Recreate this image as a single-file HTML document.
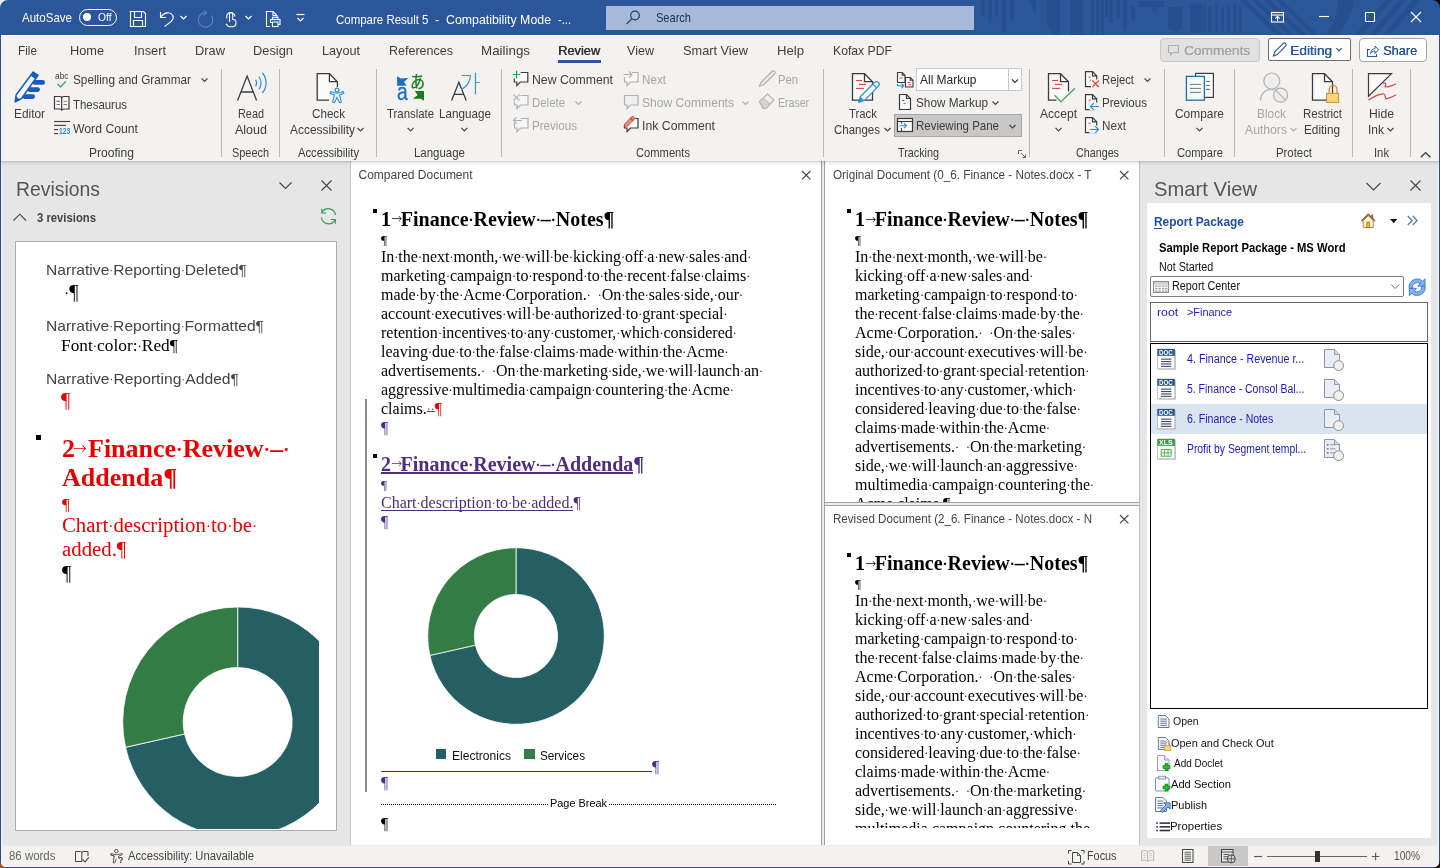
<!DOCTYPE html>
<html lang="en"><head><meta charset="utf-8"><title>Compare Result 5 - Word</title>
<style>
html,body{margin:0;padding:0}
body{width:1440px;height:868px;overflow:hidden;background:#f3f3f3;font-family:"Liberation Sans",sans-serif;color:#444;position:relative}
#app{position:absolute;left:0;top:0;width:1440px;height:868px;overflow:hidden;will-change:transform}
#app div,#app svg,#app span.t{position:absolute;display:block}
#app span.t{white-space:pre}
#app div.clip{overflow:hidden}
i{font-style:normal;font-size:.75em;position:relative;top:-.07em}
</style></head>
<body><div id="app">
<section class="titlebar">
<div style="left:0px;top:0px;width:1440px;height:35px;background:#2b579a;"></div>
<svg style="left:0;top:0" width="1440" height="35" viewBox="0 0 1440 35" fill="#254f8e"><rect x="981" y="0" width="4" height="16"/><rect x="988" y="0" width="4" height="23"/><rect x="995" y="0" width="3.5" height="17"/><rect x="1002" y="0" width="4" height="32"/><rect x="1010" y="0" width="4" height="21"/><rect x="1070" y="0" width="13" height="35"/><rect x="1091" y="0" width="3" height="35"/><rect x="1096" y="0" width="3" height="35"/><rect x="1101" y="0" width="2.5" height="35"/><rect x="1105" y="0" width="3" height="17"/><rect x="1109.5" y="0" width="3.5" height="23"/><rect x="1116" y="0" width="4" height="18"/><rect x="1123" y="0" width="4" height="31"/><rect x="1131" y="6" width="4" height="15"/><rect x="1138" y="1" width="26" height="6"/><rect x="1203" y="4" width="3" height="28"/><rect x="1208" y="6" width="4" height="26"/><rect x="1215" y="4" width="3" height="29"/><rect x="1221" y="7" width="3" height="24"/><rect x="1227" y="5" width="3" height="27"/><rect x="1233" y="3" width="4" height="30"/><rect x="1239" y="6" width="3" height="26"/><path d="M1029,0H1036V15Z"/><path d="M1047,0H1060V35H1054L1047,26Z"/><path d="M1150,7H1157V14Z"/><path d="M1168,7H1182V26A5,5 0 0 1 1177,31H1173A5,5 0 0 1 1168,26Z"/><path d="M1190,6L1196,3H1202V33H1190Z"/><path d="M1246,0L1282,35H1276L1240,0Z"/><path d="M1258,0L1294,35H1288L1252,0Z"/><path d="M1270,0L1306,35H1300L1264,0Z"/><path d="M1282,0L1318,35H1312L1276,0Z"/><path d="M1338,0H1354C1352,14 1346,26 1336,35H1326C1334,24 1338,12 1338,0Z"/><path d="M1392,0L1362,35H1355L1385,0Z"/><path d="M1406,0L1376,35H1369L1399,0Z"/><path d="M1420,0L1390,35H1383L1413,0Z"/></svg>
<div style="left:606px;top:6px;width:368px;height:24px;background:#a6b9d8;"></div>
<span class="t" style="left:22px;top:11px;font-size:13px;line-height:13px;color:#fff;transform:scaleX(0.8869);transform-origin:0 0;">AutoSave</span>
<div style="left:79px;top:9px;width:36px;height:15px;border:1px solid #fff;border-radius:9px"></div>
<div style="left:83px;top:13px;width:8px;height:8px;border-radius:4px;background:#fff"></div>
<span class="t" style="left:98px;top:12px;font-size:11px;line-height:11px;color:#fff;transform:scaleX(0.9320);transform-origin:0 0;">Off</span>
<span class="t" style="left:335.5px;top:13px;font-size:13px;line-height:13px;color:#fff;transform:scaleX(0.8828);transform-origin:0 0;">Compare Result 5</span>
<span class="t" style="left:435px;top:13px;font-size:13px;line-height:13px;color:#fff;">-</span>
<span class="t" style="left:445.75px;top:13px;font-size:13px;line-height:13px;color:#fff;transform:scaleX(0.9498);transform-origin:0 0;">Compatibility Mode</span>
<span class="t" style="left:557.5px;top:13px;font-size:13px;line-height:13px;color:#fff;transform:scaleX(0.8568);transform-origin:0 0;">-...</span>
<span class="t" style="left:656px;top:11px;font-size:13px;line-height:13px;color:#1b2f55;transform:scaleX(0.8495);transform-origin:0 0;">Search</span>
</section>
<section class="tabs">
<div style="left:0px;top:35px;width:1440px;height:126px;background:#f3f2f1;"></div>
<div style="left:0px;top:35px;width:1440px;height:1px;background:#fbfbfb;"></div>
<span class="t" style="left:18px;top:44px;font-size:13.5px;line-height:13.5px;color:#3d3d3d;transform:scaleX(0.8729);transform-origin:0 0;">File</span>
<span class="t" style="left:70px;top:44px;font-size:13.5px;line-height:13.5px;color:#3d3d3d;transform:scaleX(0.9440);transform-origin:0 0;">Home</span>
<span class="t" style="left:134px;top:44px;font-size:13.5px;line-height:13.5px;color:#3d3d3d;transform:scaleX(0.9477);transform-origin:0 0;">Insert</span>
<span class="t" style="left:195px;top:44px;font-size:13.5px;line-height:13.5px;color:#3d3d3d;transform:scaleX(0.9519);transform-origin:0 0;">Draw</span>
<span class="t" style="left:253px;top:44px;font-size:13.5px;line-height:13.5px;color:#3d3d3d;transform:scaleX(0.9517);transform-origin:0 0;">Design</span>
<span class="t" style="left:322px;top:44px;font-size:13.5px;line-height:13.5px;color:#3d3d3d;transform:scaleX(0.9372);transform-origin:0 0;">Layout</span>
<span class="t" style="left:389px;top:44px;font-size:13.5px;line-height:13.5px;color:#3d3d3d;transform:scaleX(0.9269);transform-origin:0 0;">References</span>
<span class="t" style="left:481px;top:44px;font-size:13.5px;line-height:13.5px;color:#3d3d3d;transform:scaleX(0.9893);transform-origin:0 0;">Mailings</span>
<span class="t" style="left:558px;top:44px;font-size:13.5px;line-height:13.5px;color:#333;transform:scaleX(0.9488);transform-origin:0 0;text-shadow:0.4px 0 0 #333;">Review</span>
<span class="t" style="left:627px;top:44px;font-size:13.5px;line-height:13.5px;color:#3d3d3d;transform:scaleX(0.9300);transform-origin:0 0;">View</span>
<span class="t" style="left:683px;top:44px;font-size:13.5px;line-height:13.5px;color:#3d3d3d;transform:scaleX(0.9450);transform-origin:0 0;">Smart View</span>
<span class="t" style="left:777px;top:44px;font-size:13.5px;line-height:13.5px;color:#3d3d3d;transform:scaleX(0.9724);transform-origin:0 0;">Help</span>
<span class="t" style="left:833px;top:44px;font-size:13.5px;line-height:13.5px;color:#3d3d3d;transform:scaleX(0.9038);transform-origin:0 0;">Kofax PDF</span>
<div style="left:558px;top:60px;width:43px;height:3px;background:#2b579a;"></div>
<div style="left:1160px;top:38px;width:98px;height:22px;border:1px solid #c8c8c8;border-radius:4px;background:#e1e1e1"></div>
<span class="t" style="left:1184px;top:44px;font-size:13.5px;line-height:13.5px;color:#a6a6a6;transform:scaleX(1.0113);transform-origin:0 0;text-shadow:0.3px 0 0 #a6a6a6;">Comments</span>
<div style="left:1268px;top:38px;width:81px;height:21px;border:1px solid #6e6e6e;border-radius:2px;background:#fff"></div>
<span class="t" style="left:1290px;top:44px;font-size:13.5px;line-height:13.5px;color:#2b579a;transform:scaleX(1.0174);transform-origin:0 0;text-shadow:0.4px 0 0 #2b579a;">Editing</span>
<div style="left:1359px;top:38px;width:66px;height:22px;border:1px solid #a6a6a6;border-radius:4px;background:#fff"></div>
<span class="t" style="left:1383px;top:44px;font-size:13.5px;line-height:13.5px;color:#2b579a;transform:scaleX(0.9436);transform-origin:0 0;text-shadow:0.4px 0 0 #2b579a;">Share</span>
</section>
<section class="ribbon-text">
<div style="left:221px;top:69px;width:1px;height:88px;background:#b9b9b9;"></div>
<div style="left:279px;top:69px;width:1px;height:88px;background:#b9b9b9;"></div>
<div style="left:376px;top:69px;width:1px;height:88px;background:#b9b9b9;"></div>
<div style="left:501px;top:69px;width:1px;height:88px;background:#b9b9b9;"></div>
<div style="left:823px;top:69px;width:1px;height:88px;background:#b9b9b9;"></div>
<div style="left:1029px;top:69px;width:1px;height:88px;background:#b9b9b9;"></div>
<div style="left:1164px;top:69px;width:1px;height:88px;background:#b9b9b9;"></div>
<div style="left:1234px;top:69px;width:1px;height:88px;background:#b9b9b9;"></div>
<div style="left:1352px;top:69px;width:1px;height:88px;background:#b9b9b9;"></div>
<div style="left:1410px;top:69px;width:1px;height:88px;background:#b9b9b9;"></div>
<span class="t" style="left:14px;top:108px;font-size:12.4px;line-height:12.4px;color:#3d3d3d;transform:scaleX(0.9575);transform-origin:0 0;">Editor</span>
<span class="t" style="left:73px;top:74px;font-size:12.4px;line-height:12.4px;color:#3d3d3d;transform:scaleX(0.9519);transform-origin:0 0;">Spelling and Grammar</span>
<span class="t" style="left:73px;top:99px;font-size:12.4px;line-height:12.4px;color:#3d3d3d;transform:scaleX(0.9223);transform-origin:0 0;">Thesaurus</span>
<span class="t" style="left:73px;top:123px;font-size:12.4px;line-height:12.4px;color:#3d3d3d;transform:scaleX(0.9865);transform-origin:0 0;">Word Count</span>
<span class="t" style="left:89px;top:147px;font-size:12.4px;line-height:12.4px;color:#3d3d3d;transform:scaleX(0.9749);transform-origin:0 0;">Proofing</span>
<span class="t" style="left:238px;top:108px;font-size:12.4px;line-height:12.4px;color:#3d3d3d;transform:scaleX(0.8776);transform-origin:0 0;">Read</span>
<span class="t" style="left:235px;top:124px;font-size:12.4px;line-height:12.4px;color:#3d3d3d;transform:scaleX(1.0094);transform-origin:0 0;">Aloud</span>
<span class="t" style="left:232px;top:147px;font-size:12.4px;line-height:12.4px;color:#3d3d3d;transform:scaleX(0.8803);transform-origin:0 0;">Speech</span>
<span class="t" style="left:312px;top:108px;font-size:12.4px;line-height:12.4px;color:#3d3d3d;transform:scaleX(0.9395);transform-origin:0 0;">Check</span>
<span class="t" style="left:290px;top:124px;font-size:12.4px;line-height:12.4px;color:#3d3d3d;transform:scaleX(0.9632);transform-origin:0 0;">Accessibility</span>
<span class="t" style="left:298px;top:147px;font-size:12.4px;line-height:12.4px;color:#3d3d3d;transform:scaleX(0.9039);transform-origin:0 0;">Accessibility</span>
<span class="t" style="left:387px;top:108px;font-size:12.4px;line-height:12.4px;color:#3d3d3d;transform:scaleX(0.9179);transform-origin:0 0;">Translate</span>
<span class="t" style="left:439px;top:108px;font-size:12.4px;line-height:12.4px;color:#3d3d3d;transform:scaleX(0.9430);transform-origin:0 0;">Language</span>
<span class="t" style="left:414px;top:147px;font-size:12.4px;line-height:12.4px;color:#3d3d3d;transform:scaleX(0.9249);transform-origin:0 0;">Language</span>
<span class="t" style="left:532px;top:74px;font-size:12.4px;line-height:12.4px;color:#3d3d3d;transform:scaleX(0.9886);transform-origin:0 0;">New Comment</span>
<span class="t" style="left:532px;top:97px;font-size:12.4px;line-height:12.4px;color:#a6a6a6;transform:scaleX(0.9211);transform-origin:0 0;">Delete</span>
<span class="t" style="left:532px;top:120px;font-size:12.4px;line-height:12.4px;color:#a6a6a6;transform:scaleX(0.9332);transform-origin:0 0;">Previous</span>
<span class="t" style="left:642px;top:74px;font-size:12.4px;line-height:12.4px;color:#a6a6a6;transform:scaleX(0.9418);transform-origin:0 0;">Next</span>
<span class="t" style="left:642px;top:97px;font-size:12.4px;line-height:12.4px;color:#a6a6a6;transform:scaleX(0.9752);transform-origin:0 0;">Show Comments</span>
<span class="t" style="left:642px;top:120px;font-size:12.4px;line-height:12.4px;color:#3d3d3d;transform:scaleX(0.9907);transform-origin:0 0;">Ink Comment</span>
<span class="t" style="left:636px;top:147px;font-size:12.4px;line-height:12.4px;color:#3d3d3d;transform:scaleX(0.9014);transform-origin:0 0;">Comments</span>
<span class="t" style="left:778px;top:74px;font-size:12.4px;line-height:12.4px;color:#a6a6a6;transform:scaleX(0.9072);transform-origin:0 0;">Pen</span>
<span class="t" style="left:778px;top:97px;font-size:12.4px;line-height:12.4px;color:#a6a6a6;transform:scaleX(0.8493);transform-origin:0 0;">Eraser</span>
<span class="t" style="left:849px;top:108px;font-size:12.4px;line-height:12.4px;color:#3d3d3d;transform:scaleX(0.9171);transform-origin:0 0;">Track</span>
<span class="t" style="left:834px;top:124px;font-size:12.4px;line-height:12.4px;color:#3d3d3d;transform:scaleX(0.9272);transform-origin:0 0;">Changes</span>
<div style="left:916px;top:68px;width:104px;height:21px;border:1px solid #c8c8c8;background:#fff"></div>
<div style="left:1008px;top:69px;width:1px;height:21px;background:#c8c8c8;"></div>
<span class="t" style="left:919.5px;top:74px;font-size:12.4px;line-height:12.4px;color:#262626;transform:scaleX(0.9653);transform-origin:0 0;">All Markup</span>
<span class="t" style="left:916px;top:97px;font-size:12.4px;line-height:12.4px;color:#3d3d3d;transform:scaleX(0.9503);transform-origin:0 0;">Show Markup</span>
<div style="left:894px;top:114px;width:126px;height:21px;border:1px solid #a6a6a6;background:#c8c8c8"></div>
<span class="t" style="left:916px;top:120px;font-size:12.4px;line-height:12.4px;color:#3d3d3d;transform:scaleX(0.9269);transform-origin:0 0;">Reviewing Pane</span>
<span class="t" style="left:898px;top:147px;font-size:12.4px;line-height:12.4px;color:#3d3d3d;transform:scaleX(0.8712);transform-origin:0 0;">Tracking</span>
<span class="t" style="left:1040px;top:108px;font-size:12.4px;line-height:12.4px;color:#3d3d3d;transform:scaleX(0.9765);transform-origin:0 0;">Accept</span>
<span class="t" style="left:1102px;top:74px;font-size:12.4px;line-height:12.4px;color:#3d3d3d;transform:scaleX(0.9110);transform-origin:0 0;">Reject</span>
<span class="t" style="left:1102px;top:97px;font-size:12.4px;line-height:12.4px;color:#3d3d3d;transform:scaleX(0.9332);transform-origin:0 0;">Previous</span>
<span class="t" style="left:1102px;top:120px;font-size:12.4px;line-height:12.4px;color:#3d3d3d;transform:scaleX(0.9418);transform-origin:0 0;">Next</span>
<span class="t" style="left:1076px;top:147px;font-size:12.4px;line-height:12.4px;color:#3d3d3d;transform:scaleX(0.8668);transform-origin:0 0;">Changes</span>
<span class="t" style="left:1175px;top:108px;font-size:12.4px;line-height:12.4px;color:#3d3d3d;transform:scaleX(0.9614);transform-origin:0 0;">Compare</span>
<span class="t" style="left:1177px;top:147px;font-size:12.4px;line-height:12.4px;color:#3d3d3d;transform:scaleX(0.9025);transform-origin:0 0;">Compare</span>
<span class="t" style="left:1257px;top:108px;font-size:12.4px;line-height:12.4px;color:#a6a6a6;transform:scaleX(0.9567);transform-origin:0 0;">Block</span>
<span class="t" style="left:1245px;top:124px;font-size:12.4px;line-height:12.4px;color:#a6a6a6;transform:scaleX(0.9835);transform-origin:0 0;">Authors</span>
<span class="t" style="left:1303px;top:108px;font-size:12.4px;line-height:12.4px;color:#3d3d3d;transform:scaleX(0.9286);transform-origin:0 0;">Restrict</span>
<span class="t" style="left:1304px;top:124px;font-size:12.4px;line-height:12.4px;color:#3d3d3d;transform:scaleX(0.9501);transform-origin:0 0;">Editing</span>
<span class="t" style="left:1276px;top:147px;font-size:12.4px;line-height:12.4px;color:#3d3d3d;transform:scaleX(0.9168);transform-origin:0 0;">Protect</span>
<span class="t" style="left:1369px;top:108px;font-size:12.4px;line-height:12.4px;color:#3d3d3d;transform:scaleX(0.9810);transform-origin:0 0;">Hide</span>
<span class="t" style="left:1368px;top:124px;font-size:12.4px;line-height:12.4px;color:#3d3d3d;transform:scaleX(0.9679);transform-origin:0 0;">Ink</span>
<span class="t" style="left:1374px;top:147px;font-size:12.4px;line-height:12.4px;color:#3d3d3d;transform:scaleX(0.9074);transform-origin:0 0;">Ink</span>
</section>
<section class="panes-bg">
<div style="left:0px;top:161px;width:1440px;height:684px;background:#fff;"></div>
<div style="left:0px;top:161px;width:350px;height:684px;background:#e6e6e6;"></div>
<div style="left:350px;top:161px;width:1px;height:684px;background:#c6c6c6;"></div>
<div style="left:1140px;top:161px;width:300px;height:684px;background:#e6e6e6;"></div>
<div style="left:1139px;top:161px;width:1px;height:684px;background:#c0c0c0;"></div>
<div style="left:821px;top:161px;width:4px;height:684px;background:#ececec;"></div>
<div style="left:821px;top:161px;width:1px;height:684px;background:#a0a0a0;"></div>
<div style="left:824px;top:161px;width:1px;height:684px;background:#a0a0a0;"></div>
</section>
<section class="revisions">
<span class="t" style="left:16px;top:178px;font-size:21px;line-height:21px;color:#555;transform:scaleX(0.9226);transform-origin:0 0;">Revisions</span>
<span class="t" style="left:37px;top:212px;font-size:12px;line-height:12px;font-weight:700;transform:scaleX(0.9409);transform-origin:0 0;">3 revisions</span>
<div style="left:15px;top:241px;width:320px;height:588px;border:1px solid #ababab;background:#fff"></div>
<span class="t" style="left:46px;top:262px;font-size:15px;line-height:15px;transform:scaleX(1.0405);transform-origin:0 0;">Narrative<i>·</i>Reporting<i>·</i>Deleted¶</span>
<span class="t" style="left:64px;top:282px;font-size:20.8px;line-height:20.8px;font-family:'Liberation Serif',serif;color:#000;"><i>·</i>¶</span>
<span class="t" style="left:46px;top:318px;font-size:15px;line-height:15px;transform:scaleX(1.0389);transform-origin:0 0;">Narrative<i>·</i>Reporting<i>·</i>Formatted¶</span>
<span class="t" style="left:61px;top:337px;font-size:17.33px;line-height:17.33px;font-family:'Liberation Serif',serif;color:#000;">Font<i>·</i>color:<i>·</i>Red¶</span>
<span class="t" style="left:46px;top:371px;font-size:15px;line-height:15px;transform:scaleX(1.0441);transform-origin:0 0;">Narrative<i>·</i>Reporting<i>·</i>Added¶</span>
<span class="t" style="left:61px;top:390px;font-size:20.8px;line-height:20.8px;font-family:'Liberation Serif',serif;color:#e60000;">¶</span>
<div style="left:36px;top:435px;width:5px;height:5px;background:#000;"></div>
<span class="t" style="left:62px;top:436px;font-size:26px;line-height:26px;font-family:'Liberation Serif',serif;font-weight:700;color:#e60000;">2</span>
<span class="t" style="left:72.5px;top:440px;font-size:17.2px;line-height:17.2px;font-family:'DejaVu Sans','Liberation Sans',sans-serif;font-weight:200;color:#e60000;">→</span>
<span class="t" style="left:88px;top:436px;font-size:26px;line-height:26px;font-family:'Liberation Serif',serif;font-weight:700;color:#e60000;">Finance<i>·</i>Review<i>·</i>–<i>·</i></span>
<span class="t" style="left:62px;top:465px;font-size:26px;line-height:26px;font-family:'Liberation Serif',serif;font-weight:700;color:#e60000;">Addenda¶</span>
<span class="t" style="left:62px;top:496px;font-size:17.33px;line-height:17.33px;font-family:'Liberation Serif',serif;color:#e60000;">¶</span>
<span class="t" style="left:62px;top:515px;font-size:20.8px;line-height:20.8px;font-family:'Liberation Serif',serif;color:#e60000;">Chart<i>·</i>description<i>·</i>to<i>·</i>be<i>·</i></span>
<span class="t" style="left:62px;top:539px;font-size:20.8px;line-height:20.8px;font-family:'Liberation Serif',serif;color:#e60000;">added.¶</span>
<span class="t" style="left:62px;top:563px;font-size:20.8px;line-height:20.8px;font-family:'Liberation Serif',serif;color:#000;">¶</span>
<svg style="left:16px;top:600px;" width="303" height="229" viewBox="0 0 303 229"><path d="M221.70,7.00 A115,115 0 1 1 109.52,147.30 L168.54,133.99 A54.5,54.5 0 1 0 221.70,67.50 Z" fill="#255e63" stroke="#fff" stroke-width="0.8"/><path d="M109.52,147.30 A115,115 0 0 1 221.70,7.00 L221.70,67.50 A54.5,54.5 0 0 0 168.54,133.99 Z" fill="#347c45" stroke="#fff" stroke-width="0.8"/></svg>
</section>
<section class="compared">
<span class="t" style="left:358.5px;top:169px;font-size:12px;line-height:12px;">Compared Document</span>
<div style="left:373px;top:209px;width:4px;height:4px;background:#000;"></div>
<span class="t" style="left:381px;top:209px;font-size:20px;line-height:20px;font-family:'Liberation Serif',serif;font-weight:700;color:#000;">1</span>
<span class="t" style="left:391px;top:212px;font-size:13.2px;line-height:13.2px;font-family:'DejaVu Sans','Liberation Sans',sans-serif;font-weight:200;color:#000;">→</span>
<span class="t" style="left:400.8px;top:209px;font-size:20px;line-height:20px;font-family:'Liberation Serif',serif;font-weight:700;color:#000;">Finance<i>·</i>Review<i>·</i>–<i>·</i>Notes¶</span>
<span class="t" style="left:381px;top:233px;font-size:13.33px;line-height:13.33px;font-family:'Liberation Serif',serif;color:#000;">¶</span>
<span class="t" style="left:381px;top:249px;font-size:16px;line-height:16px;font-family:'Liberation Serif',serif;color:#000;">In<i>·</i>the<i>·</i>next<i>·</i>month,<i>·</i>we<i>·</i>will<i>·</i>be<i>·</i>kicking<i>·</i>off<i>·</i>a<i>·</i>new<i>·</i>sales<i>·</i>and<i>·</i></span>
<span class="t" style="left:381px;top:268px;font-size:16px;line-height:16px;font-family:'Liberation Serif',serif;color:#000;">marketing<i>·</i>campaign<i>·</i>to<i>·</i>respond<i>·</i>to<i>·</i>the<i>·</i>recent<i>·</i>false<i>·</i>claims<i>·</i></span>
<span class="t" style="left:381px;top:287px;font-size:16px;line-height:16px;font-family:'Liberation Serif',serif;color:#000;word-spacing:3px;">made<i>·</i>by<i>·</i>the<i>·</i>Acme<i>·</i>Corporation.<i>·</i> <i>·</i>On<i>·</i>the<i>·</i>sales<i>·</i>side,<i>·</i>our<i>·</i></span>
<span class="t" style="left:381px;top:306px;font-size:16px;line-height:16px;font-family:'Liberation Serif',serif;color:#000;">account<i>·</i>executives<i>·</i>will<i>·</i>be<i>·</i>authorized<i>·</i>to<i>·</i>grant<i>·</i>special<i>·</i></span>
<span class="t" style="left:381px;top:325px;font-size:16px;line-height:16px;font-family:'Liberation Serif',serif;color:#000;">retention<i>·</i>incentives<i>·</i>to<i>·</i>any<i>·</i>customer,<i>·</i>which<i>·</i>considered<i>·</i></span>
<span class="t" style="left:381px;top:344px;font-size:16px;line-height:16px;font-family:'Liberation Serif',serif;color:#000;">leaving<i>·</i>due<i>·</i>to<i>·</i>the<i>·</i>false<i>·</i>claims<i>·</i>made<i>·</i>within<i>·</i>the<i>·</i>Acme<i>·</i></span>
<span class="t" style="left:381px;top:363px;font-size:16px;line-height:16px;font-family:'Liberation Serif',serif;color:#000;word-spacing:3px;">advertisements.<i>·</i> <i>·</i>On<i>·</i>the<i>·</i>marketing<i>·</i>side,<i>·</i>we<i>·</i>will<i>·</i>launch<i>·</i>an<i>·</i></span>
<span class="t" style="left:381px;top:382px;font-size:16px;line-height:16px;font-family:'Liberation Serif',serif;color:#000;">aggressive<i>·</i>multimedia<i>·</i>campaign<i>·</i>countering<i>·</i>the<i>·</i>Acme<i>·</i></span>
<span class="t" style="left:381px;top:401px;font-size:16px;line-height:16px;font-family:'Liberation Serif',serif;color:#000;">claims.</span>
<span class="t" style="left:426.8px;top:401px;font-size:16px;line-height:16px;font-family:'Liberation Serif',serif;color:#e60000;text-decoration:line-through;"><i>·</i><i>·</i></span>
<span class="t" style="left:434.8px;top:401px;font-size:16px;line-height:16px;font-family:'Liberation Serif',serif;color:#e60000;">¶</span>
<span class="t" style="left:381px;top:420px;font-size:16px;line-height:16px;font-family:'Liberation Serif',serif;color:#4f2d7f;">¶</span>
<div style="left:365px;top:399px;width:2px;height:393px;background:#8c8c8c;"></div>
<div style="left:373px;top:454px;width:4px;height:4px;background:#000;"></div>
<span class="t" style="left:381px;top:454px;font-size:20px;line-height:20px;font-family:'Liberation Serif',serif;font-weight:700;color:#4f2d7f;">2</span>
<span class="t" style="left:391px;top:457px;font-size:13.2px;line-height:13.2px;font-family:'DejaVu Sans','Liberation Sans',sans-serif;font-weight:200;color:#4f2d7f;">→</span>
<span class="t" style="left:400.5px;top:454px;font-size:20px;line-height:20px;font-family:'Liberation Serif',serif;font-weight:700;color:#4f2d7f;">Finance<i>·</i>Review<i>·</i>–<i>·</i>Addenda</span>
<div style="left:381px;top:472px;width:252.3px;height:2px;background:#4f2d7f;"></div>
<span class="t" style="left:633.3px;top:454px;font-size:20px;line-height:20px;font-family:'Liberation Serif',serif;font-weight:700;color:#4f2d7f;">¶</span>
<span class="t" style="left:381px;top:478px;font-size:13.33px;line-height:13.33px;font-family:'Liberation Serif',serif;color:#4f2d7f;">¶</span>
<span class="t" style="left:381px;top:495px;font-size:16px;line-height:16px;font-family:'Liberation Serif',serif;color:#4f2d7f;">Chart<i>·</i>description<i>·</i>to<i>·</i>be<i>·</i>added.</span>
<div style="left:381px;top:510px;width:192.4px;height:1px;background:#4f2d7f;"></div>
<span class="t" style="left:573.4px;top:495px;font-size:16px;line-height:16px;font-family:'Liberation Serif',serif;color:#4f2d7f;">¶</span>
<span class="t" style="left:381px;top:514px;font-size:16px;line-height:16px;font-family:'Liberation Serif',serif;color:#4f2d7f;">¶</span>
<svg style="left:420px;top:540px;" width="200" height="192" viewBox="0 0 200 192"><path d="M96.00,7.70 A88.3,88.3 0 1 1 9.86,115.42 L55.42,105.15 A41.6,41.6 0 1 0 96.00,54.40 Z" fill="#255e63" stroke="#fff" stroke-width="0.8"/><path d="M9.86,115.42 A88.3,88.3 0 0 1 96.00,7.70 L96.00,54.40 A41.6,41.6 0 0 0 55.42,105.15 Z" fill="#347c45" stroke="#fff" stroke-width="0.8"/></svg>
<div style="left:435.5px;top:748.5px;width:10.5px;height:10.5px;background:#255e63;"></div>
<span class="t" style="left:452px;top:750px;font-size:12px;line-height:12px;color:#111;transform:scaleX(1.0053);transform-origin:0 0;">Electronics</span>
<div style="left:524px;top:748.5px;width:10.5px;height:10.5px;background:#347c45;"></div>
<span class="t" style="left:540px;top:750px;font-size:12px;line-height:12px;color:#111;transform:scaleX(0.9779);transform-origin:0 0;">Services</span>
<div style="left:381px;top:771px;width:271px;height:1px;background:#4f2d7f;"></div>
<span class="t" style="left:652px;top:759px;font-size:16px;line-height:16px;font-family:'Liberation Serif',serif;color:#4f2d7f;">¶</span>
<span class="t" style="left:381px;top:775px;font-size:16px;line-height:16px;font-family:'Liberation Serif',serif;color:#4f2d7f;">¶</span>
<div style="left:381px;top:804px;width:395px;height:0;border-top:1px dotted #000"></div>
<div style="left:548px;top:797px;width:61px;height:12px;background:#fff;"></div>
<span class="t" style="left:550px;top:798px;font-size:11px;line-height:11px;color:#000;transform:scaleX(0.9916);transform-origin:0 0;">Page Break</span>
<span class="t" style="left:381px;top:816px;font-size:16px;line-height:16px;font-family:'Liberation Serif',serif;color:#000;">¶</span>
</section>
<section class="original">
<span class="t" style="left:832.5px;top:169px;font-size:12px;line-height:12px;transform:scaleX(0.9771);transform-origin:0 0;">Original Document (0_6. Finance - Notes.docx - T</span>
<div style="left:847px;top:209px;width:4px;height:4px;background:#000;"></div>
<span class="t" style="left:855px;top:209px;font-size:20px;line-height:20px;font-family:'Liberation Serif',serif;font-weight:700;color:#000;">1</span>
<span class="t" style="left:865px;top:213px;font-size:13.2px;line-height:13.2px;font-family:'DejaVu Sans','Liberation Sans',sans-serif;font-weight:200;color:#000;">→</span>
<span class="t" style="left:874.8px;top:209px;font-size:20px;line-height:20px;font-family:'Liberation Serif',serif;font-weight:700;color:#000;">Finance<i>·</i>Review<i>·</i>–<i>·</i>Notes¶</span>
<span class="t" style="left:855px;top:233px;font-size:13.33px;line-height:13.33px;font-family:'Liberation Serif',serif;color:#000;">¶</span>
<span class="t" style="left:855px;top:249px;font-size:16px;line-height:16px;font-family:'Liberation Serif',serif;color:#000;">In<i>·</i>the<i>·</i>next<i>·</i>month,<i>·</i>we<i>·</i>will<i>·</i>be<i>·</i></span>
<span class="t" style="left:855px;top:268px;font-size:16px;line-height:16px;font-family:'Liberation Serif',serif;color:#000;">kicking<i>·</i>off<i>·</i>a<i>·</i>new<i>·</i>sales<i>·</i>and<i>·</i></span>
<span class="t" style="left:855px;top:287px;font-size:16px;line-height:16px;font-family:'Liberation Serif',serif;color:#000;">marketing<i>·</i>campaign<i>·</i>to<i>·</i>respond<i>·</i>to<i>·</i></span>
<span class="t" style="left:855px;top:306px;font-size:16px;line-height:16px;font-family:'Liberation Serif',serif;color:#000;">the<i>·</i>recent<i>·</i>false<i>·</i>claims<i>·</i>made<i>·</i>by<i>·</i>the<i>·</i></span>
<span class="t" style="left:855px;top:325px;font-size:16px;line-height:16px;font-family:'Liberation Serif',serif;color:#000;word-spacing:3px;">Acme<i>·</i>Corporation.<i>·</i> <i>·</i>On<i>·</i>the<i>·</i>sales<i>·</i></span>
<span class="t" style="left:855px;top:344px;font-size:16px;line-height:16px;font-family:'Liberation Serif',serif;color:#000;">side,<i>·</i>our<i>·</i>account<i>·</i>executives<i>·</i>will<i>·</i>be<i>·</i></span>
<span class="t" style="left:855px;top:363px;font-size:16px;line-height:16px;font-family:'Liberation Serif',serif;color:#000;">authorized<i>·</i>to<i>·</i>grant<i>·</i>special<i>·</i>retention<i>·</i></span>
<span class="t" style="left:855px;top:382px;font-size:16px;line-height:16px;font-family:'Liberation Serif',serif;color:#000;">incentives<i>·</i>to<i>·</i>any<i>·</i>customer,<i>·</i>which<i>·</i></span>
<span class="t" style="left:855px;top:401px;font-size:16px;line-height:16px;font-family:'Liberation Serif',serif;color:#000;">considered<i>·</i>leaving<i>·</i>due<i>·</i>to<i>·</i>the<i>·</i>false<i>·</i></span>
<span class="t" style="left:855px;top:420px;font-size:16px;line-height:16px;font-family:'Liberation Serif',serif;color:#000;">claims<i>·</i>made<i>·</i>within<i>·</i>the<i>·</i>Acme<i>·</i></span>
<span class="t" style="left:855px;top:439px;font-size:16px;line-height:16px;font-family:'Liberation Serif',serif;color:#000;word-spacing:3px;">advertisements.<i>·</i> <i>·</i>On<i>·</i>the<i>·</i>marketing<i>·</i></span>
<span class="t" style="left:855px;top:458px;font-size:16px;line-height:16px;font-family:'Liberation Serif',serif;color:#000;">side,<i>·</i>we<i>·</i>will<i>·</i>launch<i>·</i>an<i>·</i>aggressive<i>·</i></span>
<span class="t" style="left:855px;top:477px;font-size:16px;line-height:16px;font-family:'Liberation Serif',serif;color:#000;">multimedia<i>·</i>campaign<i>·</i>countering<i>·</i>the<i>·</i></span>
<span class="t" style="left:855px;top:496px;font-size:16px;line-height:16px;font-family:'Liberation Serif',serif;color:#000;">Acme<i>·</i>claims.¶</span>
<div style="left:825px;top:502px;width:314px;height:343px;background:#fff;"></div>
<div style="left:825px;top:502px;width:314px;height:4px;background:#ececec;"></div>
<div style="left:825px;top:502px;width:314px;height:1px;background:#a0a0a0;"></div>
<div style="left:825px;top:505px;width:314px;height:1px;background:#a0a0a0;"></div>
</section>
<section class="revised">
<span class="t" style="left:832.5px;top:513px;font-size:12px;line-height:12px;transform:scaleX(0.9660);transform-origin:0 0;">Revised Document (2_6. Finance - Notes.docx - N</span>
<div style="left:847px;top:553px;width:4px;height:4px;background:#000;"></div>
<span class="t" style="left:855px;top:553px;font-size:20px;line-height:20px;font-family:'Liberation Serif',serif;font-weight:700;color:#000;">1</span>
<span class="t" style="left:865px;top:557px;font-size:13.2px;line-height:13.2px;font-family:'DejaVu Sans','Liberation Sans',sans-serif;font-weight:200;color:#000;">→</span>
<span class="t" style="left:874.8px;top:553px;font-size:20px;line-height:20px;font-family:'Liberation Serif',serif;font-weight:700;color:#000;">Finance<i>·</i>Review<i>·</i>–<i>·</i>Notes¶</span>
<span class="t" style="left:855px;top:577px;font-size:13.33px;line-height:13.33px;font-family:'Liberation Serif',serif;color:#000;">¶</span>
<span class="t" style="left:855px;top:593px;font-size:16px;line-height:16px;font-family:'Liberation Serif',serif;color:#000;">In<i>·</i>the<i>·</i>next<i>·</i>month,<i>·</i>we<i>·</i>will<i>·</i>be<i>·</i></span>
<span class="t" style="left:855px;top:612px;font-size:16px;line-height:16px;font-family:'Liberation Serif',serif;color:#000;">kicking<i>·</i>off<i>·</i>a<i>·</i>new<i>·</i>sales<i>·</i>and<i>·</i></span>
<span class="t" style="left:855px;top:631px;font-size:16px;line-height:16px;font-family:'Liberation Serif',serif;color:#000;">marketing<i>·</i>campaign<i>·</i>to<i>·</i>respond<i>·</i>to<i>·</i></span>
<span class="t" style="left:855px;top:650px;font-size:16px;line-height:16px;font-family:'Liberation Serif',serif;color:#000;">the<i>·</i>recent<i>·</i>false<i>·</i>claims<i>·</i>made<i>·</i>by<i>·</i>the<i>·</i></span>
<span class="t" style="left:855px;top:669px;font-size:16px;line-height:16px;font-family:'Liberation Serif',serif;color:#000;word-spacing:3px;">Acme<i>·</i>Corporation.<i>·</i> <i>·</i>On<i>·</i>the<i>·</i>sales<i>·</i></span>
<span class="t" style="left:855px;top:688px;font-size:16px;line-height:16px;font-family:'Liberation Serif',serif;color:#000;">side,<i>·</i>our<i>·</i>account<i>·</i>executives<i>·</i>will<i>·</i>be<i>·</i></span>
<span class="t" style="left:855px;top:707px;font-size:16px;line-height:16px;font-family:'Liberation Serif',serif;color:#000;">authorized<i>·</i>to<i>·</i>grant<i>·</i>special<i>·</i>retention<i>·</i></span>
<span class="t" style="left:855px;top:726px;font-size:16px;line-height:16px;font-family:'Liberation Serif',serif;color:#000;">incentives<i>·</i>to<i>·</i>any<i>·</i>customer,<i>·</i>which<i>·</i></span>
<span class="t" style="left:855px;top:745px;font-size:16px;line-height:16px;font-family:'Liberation Serif',serif;color:#000;">considered<i>·</i>leaving<i>·</i>due<i>·</i>to<i>·</i>the<i>·</i>false<i>·</i></span>
<span class="t" style="left:855px;top:764px;font-size:16px;line-height:16px;font-family:'Liberation Serif',serif;color:#000;">claims<i>·</i>made<i>·</i>within<i>·</i>the<i>·</i>Acme<i>·</i></span>
<span class="t" style="left:855px;top:783px;font-size:16px;line-height:16px;font-family:'Liberation Serif',serif;color:#000;word-spacing:3px;">advertisements.<i>·</i> <i>·</i>On<i>·</i>the<i>·</i>marketing<i>·</i></span>
<span class="t" style="left:855px;top:802px;font-size:16px;line-height:16px;font-family:'Liberation Serif',serif;color:#000;">side,<i>·</i>we<i>·</i>will<i>·</i>launch<i>·</i>an<i>·</i>aggressive<i>·</i></span>
<span class="t" style="left:855px;top:821px;font-size:16px;line-height:16px;font-family:'Liberation Serif',serif;color:#000;">multimedia<i>·</i>campaign<i>·</i>countering<i>·</i>the<i>·</i></span>
<span class="t" style="left:855px;top:840px;font-size:16px;line-height:16px;font-family:'Liberation Serif',serif;color:#000;">Acme<i>·</i>claims.¶</span>
<div style="left:825px;top:828px;width:314px;height:17px;background:#fff;"></div>
</section>
<section class="smartview">
<span class="t" style="left:1153.5px;top:178px;font-size:21px;line-height:21px;color:#555;transform:scaleX(0.9628);transform-origin:0 0;">Smart View</span>
<div style="left:1147px;top:203px;width:284px;height:635px;background:#fff;"></div>
<span class="t" style="left:1153.5px;top:216px;font-size:12px;line-height:12px;font-weight:700;color:#1f4e9b;transform:scaleX(0.9922);transform-origin:0 0;">Report Package</span>
<div style="left:1153.5px;top:228px;width:8.5px;height:1px;background:#1f4e9b;"></div>
<span class="t" style="left:1158.75px;top:242px;font-size:12px;line-height:12px;font-weight:700;color:#000;transform:scaleX(0.9364);transform-origin:0 0;">Sample Report Package - MS Word</span>
<span class="t" style="left:1158.75px;top:261px;font-size:12px;line-height:12px;color:#111;transform:scaleX(0.8945);transform-origin:0 0;">Not Started</span>
<div style="left:1150px;top:276px;width:252px;height:19px;border:1px solid #7a7a7a;border-radius:2px;background:#fff"></div>
<span class="t" style="left:1171.7px;top:280px;font-size:12px;line-height:12px;color:#111;transform:scaleX(0.9022);transform-origin:0 0;">Report Center</span>
<div style="left:1150px;top:302px;width:276px;height:38px;border:1px solid #646464;background:#fff"></div>
<span class="t" style="left:1156.7px;top:307px;font-size:11.5px;line-height:11.5px;color:#1c1cb4;transform:scaleX(1.0742);transform-origin:0 0;">root</span>
<span class="t" style="left:1186.9px;top:307px;font-size:11.5px;line-height:11.5px;color:#1c1cb4;transform:scaleX(0.9467);transform-origin:0 0;">&gt;Finance</span>
<div style="left:1150px;top:343px;width:276px;height:364px;border:1px solid #000;background:#fff"></div>
<div style="left:1151px;top:404px;width:276px;height:30px;background:#d9e4f1;"></div>
<span class="t" style="left:1187.3px;top:353px;font-size:12.3px;line-height:12.3px;color:#1c1cb4;transform:scaleX(0.8711);transform-origin:0 0;">4. Finance - Revenue r...</span>
<span class="t" style="left:1187.3px;top:383px;font-size:12.3px;line-height:12.3px;color:#1c1cb4;transform:scaleX(0.8495);transform-origin:0 0;">5. Finance - Consol Bal...</span>
<span class="t" style="left:1187.3px;top:413px;font-size:12.3px;line-height:12.3px;color:#1c1cb4;transform:scaleX(0.8578);transform-origin:0 0;">6. Finance - Notes</span>
<span class="t" style="left:1187.3px;top:443px;font-size:12.3px;line-height:12.3px;color:#1c1cb4;transform:scaleX(0.8425);transform-origin:0 0;">Profit by Segment templ...</span>
<span class="t" style="left:1172.7px;top:716px;font-size:11.5px;line-height:11.5px;color:#111;transform:scaleX(0.9097);transform-origin:0 0;">Open</span>
<span class="t" style="left:1171.25px;top:738px;font-size:11.5px;line-height:11.5px;color:#111;transform:scaleX(0.9510);transform-origin:0 0;">Open and Check Out</span>
<span class="t" style="left:1174.4px;top:758px;font-size:11.5px;line-height:11.5px;color:#111;transform:scaleX(0.8691);transform-origin:0 0;">Add Doclet</span>
<span class="t" style="left:1170.6px;top:779px;font-size:11.5px;line-height:11.5px;color:#111;transform:scaleX(0.9675);transform-origin:0 0;">Add Section</span>
<span class="t" style="left:1171.25px;top:800px;font-size:11.5px;line-height:11.5px;color:#111;transform:scaleX(0.9558);transform-origin:0 0;">Publish</span>
<span class="t" style="left:1170.2px;top:821px;font-size:11.5px;line-height:11.5px;color:#111;transform:scaleX(0.9939);transform-origin:0 0;">Properties</span>
</section>
<section class="statusbar">
<div style="left:0px;top:845px;width:1440px;height:23px;background:#f3f2f1;"></div>
<div style="left:0px;top:845px;width:1440px;height:1px;background:#e9e9e9;"></div>
<span class="t" style="left:9px;top:850px;font-size:12px;line-height:12px;color:#666;transform:scaleX(0.9527);transform-origin:0 0;">86 words</span>
<span class="t" style="left:127.5px;top:850px;font-size:12px;line-height:12px;transform:scaleX(0.9352);transform-origin:0 0;">Accessibility: Unavailable</span>
<span class="t" style="left:1086.5px;top:850px;font-size:12px;line-height:12px;transform:scaleX(0.9025);transform-origin:0 0;">Focus</span>
<div style="left:1208px;top:846px;width:40px;height:20px;background:#c8c8c8;"></div>
<span class="t" style="left:1393.75px;top:850px;font-size:12px;line-height:12px;color:#555;transform:scaleX(0.8468);transform-origin:0 0;">100%</span>
<div style="left:1267px;top:856px;width:100px;height:1px;background:#666;"></div>
<div style="left:1315px;top:851px;width:5px;height:11px;background:#333;"></div>
<div style="left:0px;top:35px;width:1px;height:833px;background:#2f4e80;"></div>
<div style="left:1px;top:36px;width:1px;height:831px;background:#eef2fa;"></div>
<div style="left:1438px;top:36px;width:1px;height:831px;background:#eef2fa;"></div>
<div style="left:1439px;top:35px;width:1px;height:833px;background:#2f4e80;"></div>
<div style="left:0px;top:867px;width:1440px;height:1px;background:#2b579a;"></div>
<svg style="left:0;top:0" width="1440" height="868" viewBox="0 0 1440 868"><path d="M0,0H8A8,8 0 0 0 0,8Z" fill="#e8eef6"/><path d="M1440,0H1432A8,8 0 0 1 1440,8Z" fill="#0c0c0c"/><path d="M0,868H8A8,8 0 0 1 0,860Z" fill="#a0522d"/><path d="M1440,868H1432A8,8 0 0 0 1440,860Z" fill="#101820"/></svg>
</section>
<section class="ribbon-shadow">
<div style="left:1px;top:161px;width:1438px;height:5px;background:linear-gradient(rgba(0,0,0,.19),rgba(0,0,0,.08) 30%,rgba(0,0,0,.03) 65%,rgba(0,0,0,0))"></div>
</section>
<section class="icons">
<svg style="left:0;top:0" width="1440" height="868" viewBox="0 0 1440 868" fill="none" stroke-linecap="butt"><path d="M130.5,11.5H143.5L145.5,13.5V26.5H130.5Z" stroke="#fff" stroke-width="1.1" fill="none" /><path d="M134.5,11.5V17.5H141.5V11.5" stroke="#fff" stroke-width="1.1" fill="none" /><path d="M133.5,26.5V20.5H142.5V26.5" stroke="#fff" stroke-width="1.1" fill="none" /><path d="M160.5,12V17.5H166" stroke="#fff" stroke-width="1.1" fill="none" /><path d="M160.8,17.2C164,12.5 170,11 172.8,15.5C174.8,19.5 170,22.5 164.5,26.5" stroke="#fff" stroke-width="1.1" fill="none" /><path d="M180.5,16.0L183.5,19.0L186.5,16.0" stroke="#fff" stroke-width="1.2" fill="none" /><path d="M204.5,12.6A7.3,7.3 0 1 0 211.5,15.5" stroke="#5f86c4" stroke-width="1.1" fill="none" /><path d="M203.5,10.5L206.5,12.8L203.5,15.5" stroke="#5f86c4" stroke-width="1.1" fill="none" /><path d="M229.5,22V14.2A1.6,1.6 0 0 1 232.7,14.2V20 M232.7,19.5C235,19.3 236,20.5 236,22.5C236,25 234.5,26.8 232,26.8H230.5C228.5,26.8 227,25.5 226,23.8" stroke="#fff" stroke-width="1.1" fill="none" /><path d="M227,18.5A4.2,4.2 0 1 1 235,16.5" stroke="#fff" stroke-width="1.1" fill="none" /><path d="M245.5,16.0L248.5,19.0L251.5,16.0" stroke="#fff" stroke-width="1.2" fill="none" /><path d="M270,26.5H266.5V11.5H273L277,15.5V18" stroke="#fff" stroke-width="1.1" fill="none" /><path d="M273,11.5V15.5H277" stroke="#fff" stroke-width="1.1" fill="none" /><path d="M272.5,22.5H270.5V19.5H280V24.5H278" stroke="#fff" stroke-width="1.1" fill="none" /><rect x="272.5" y="22" width="5.5" height="4.5" rx="0" stroke="#fff" stroke-width="1.1" fill="none"/><rect x="272.5" y="17.3" width="5.5" height="2.2" rx="0" stroke="#fff" stroke-width="1.1" fill="none"/><path d="M296.5,14.5L304.5,14.5" stroke="#fff" stroke-width="1.2" fill="none" /><path d="M297.5,18.0L300.5,21.0L303.5,18.0" stroke="#fff" stroke-width="1.2" fill="none" /><circle cx="635" cy="15.5" r="4.3" stroke="#1f3864" stroke-width="1.2" fill="none"/><path d="M632,18.7L626.5,24.2" stroke="#1f3864" stroke-width="1.2" fill="none" /><rect x="1271.5" y="12.5" width="12" height="9.5" rx="0" stroke="#fff" stroke-width="1.1" fill="none"/><path d="M1271.5,15L1283.5,15" stroke="#fff" stroke-width="1.1" fill="none" /><path d="M1277.5,21V16.5M1275.3,18.6L1277.5,16.4L1279.7,18.6" stroke="#fff" stroke-width="1.1" fill="none" /><path d="M1319,16.5L1329,16.5" stroke="#fff" stroke-width="1.1" fill="none" /><rect x="1365.5" y="12.5" width="9" height="9" rx="0.8" stroke="#fff" stroke-width="1.1" fill="none"/><path d="M1411,12L1421,22M1421,12L1411,22" stroke="#fff" stroke-width="1.1" fill="none" /><path d="M1168.5,45.5H1178.5V52.5H1173L1170.5,55V52.5H1168.5Z" stroke="#b0b0b0" stroke-width="1.1" fill="none" /><path d="M1273.5,56L1274.6,52L1283,43.6A1.6,1.6 0 0 1 1285.6,46.2L1277.2,54.6Z" stroke="#2b579a" stroke-width="1.1" fill="none" /><path d="M1336.4,48.2L1339,50.8L1341.6,48.2" stroke="#2b579a" stroke-width="1.2" fill="none" /><path d="M1370,49.5H1367.5V56.5H1376.5V54" stroke="#2b579a" stroke-width="1.1" fill="none" /><path d="M1370.5,53.5C1371,50 1373,48.5 1375,48.5V46L1378.6,49.8L1375,53.5V51C1373.5,51 1372,51.8 1370.5,53.5Z" stroke="#2b579a" stroke-width="1" fill="none" /><path d="M1420.8,157.3L1425.6,152.6L1430.4,157.3" stroke="#333" stroke-width="1.3" fill="none" /><path d="M1018.5,154V150.5H1022" stroke="#666" stroke-width="1" fill="none" /><path d="M1021,153L1025.5,157.5M1025.5,154.5V157.5H1022.5" stroke="#666" stroke-width="1" fill="none" /><rect x="32.5" y="80.10000000000001" width="12.5" height="4.6" rx="2.3" fill="#185abd"/><rect x="27.5" y="87.3" width="12.5" height="4.6" rx="2.3" fill="#185abd"/><rect x="22.5" y="94.3" width="12.5" height="4.6" rx="2.3" fill="#185abd"/><path d="M33.2,72L38,75.3L21.5,98.5L15.2,101.8L16.2,94.8Z" stroke="#185abd" stroke-width="1.5" fill="#f6f8fc" stroke-linejoin="round"/><path d="M31,75.2L35.8,78.5" stroke="#185abd" stroke-width="1.3" fill="none" /><path d="M33.2,72L38,75.3L36,78.2L31.2,74.9Z" stroke="#185abd" stroke-width="1" fill="#185abd" /><path d="M15.2,101.8L15.9,97L19.5,99.6Z" stroke="#185abd" stroke-width="0.8" fill="#185abd" /><path d="M57.5,84L60.5,87L66,81.3" stroke="#4ca858" stroke-width="1.3" fill="none" /><path d="M54.5,96.5H59.5C60.7,96.5 61.7,97.2 61.7,98.2C61.7,97.2 62.7,96.5 63.9,96.5H69V109H63.9C62.7,109 61.7,109.6 61.7,110.6C61.7,109.6 60.7,109 59.5,109H54.5Z" stroke="#3b3b3b" stroke-width="1.2" fill="#fafafa" /><path d="M61.7,97.5L61.7,110.5" stroke="#3b3b3b" stroke-width="1.2" fill="none" /><path d="M56.5,101.3L60,101.3" stroke="#c8475a" stroke-width="1.2" fill="none" /><path d="M56.5,104.5L60,104.5" stroke="#777" stroke-width="1" fill="none" /><path d="M63.5,101.3L67,101.3" stroke="#777" stroke-width="1" fill="none" /><path d="M63.5,104.5L67,104.5" stroke="#777" stroke-width="1" fill="none" /><path d="M54,121.5L70,121.5" stroke="#3b3b3b" stroke-width="1.1" fill="none" /><path d="M54,125.4L66,125.4" stroke="#3b3b3b" stroke-width="1.1" fill="none" /><path d="M54,129.6L58,129.6" stroke="#3b3b3b" stroke-width="1.1" fill="none" /><path d="M54,133.6L58,133.6" stroke="#3b3b3b" stroke-width="1.1" fill="none" /><path d="M201.5,78.5L204.5,81.5L207.5,78.5" stroke="#444" stroke-width="1.2" fill="none" /><path d="M237.6,100.5L247.1,76L256.6,100.5M241,92H253.2" stroke="#3b3b3b" stroke-width="1.3" fill="none" /><path d="M255.6,79.8A6,6 0 0 1 255.6,86.2" stroke="#2e8bd4" stroke-width="1.2" fill="none" /><path d="M258.8,76.5A10.5,10.5 0 0 1 258.8,89.5" stroke="#2e8bd4" stroke-width="1.2" fill="none" /><path d="M262.4,73.0A15.5,15.5 0 0 1 262.4,93.0" stroke="#2e8bd4" stroke-width="1.2" fill="none" /><path d="M317.2,73.7H329.4L337.4,81.7V100.2H317.2Z" stroke="#3b3b3b" stroke-width="1.3" fill="#fafafa" /><path d="M329.4,73.7V81.7H337.4" stroke="#3b3b3b" stroke-width="1.3" fill="none" /><rect x="329" y="87" width="16" height="17" fill="#f3f2f1"/><circle cx="337" cy="90" r="1.9" stroke="#2e8bd4" stroke-width="1.2" fill="none"/><path d="M330.8,91.5C333,92.6 335,93.2 337,93.2C339,93.2 341,92.6 343.2,91.5L343.8,93.2C342,94.2 340.5,94.8 339.6,95.1L341.4,102.2L339.6,102.7L337,97.5L334.4,102.7L332.6,102.2L334.4,95.1C333.5,94.8 332,94.2 330.2,93.2Z" stroke="#2e8bd4" stroke-width="1.1" fill="none" /><path d="M357.5,128.0L360.5,131.0L363.5,128.0" stroke="#444" stroke-width="1.2" fill="none" /><path d="M397.1,76.2L400.9,78.6L408.5,78L403.9,82L406.5,85.7H397.1Z" fill="#1e6fc2"/><path d="M424,91.1V100.7L420.7,98.7H412.8L417.7,95L414.7,91.1Z" fill="#1a7a1a"/><path d="M407.6,127.80000000000001L410.6,130.8L413.6,127.80000000000001" stroke="#444" stroke-width="1.2" fill="none" /><path d="M461.4,127.80000000000001L464.4,130.8L467.4,127.80000000000001" stroke="#444" stroke-width="1.2" fill="none" /><path d="M451.6,100.6L458.9,82.3L466.2,100.6M454.2,94.4H463.6" stroke="#3b3b3b" stroke-width="1.3" fill="none" /><path d="M514.3,72.5H527.8V82.0H520.3L516.8,85.5V82.0H514.3Z" stroke="#3b3b3b" stroke-width="1.2" fill="#fafafa" /><rect x="512" y="70" width="8.5" height="8.5" fill="#f3f2f1"/><path d="M516.5,70.8V78.2M512.8,74.5H520.2" stroke="#2a9d4a" stroke-width="1.2" fill="none" /><path d="M514.5,95.5H528.0V105.0H520.5L517.0,108.5V105.0H514.5Z" stroke="#b0b0b0" stroke-width="1.2" fill="#f6f6f6" /><rect x="512" y="93" width="8.5" height="8.5" fill="#f3f2f1"/><path d="M513.3,94.3L519.7,100.7M519.7,94.3L513.3,100.7" stroke="#b0b0b0" stroke-width="1.1" fill="none" /><path d="M514.5,118.5H528.0V128.0H520.5L517.0,131.5V128.0H514.5Z" stroke="#b0b0b0" stroke-width="1.2" fill="#f6f6f6" /><rect x="512" y="118" width="9" height="5" fill="#f3f2f1"/><path d="M522,120.5H513.5M516.5,117.5L513.5,120.5L516.5,123.5" stroke="#b0b0b0" stroke-width="1.1" fill="none" /><path d="M575.5,101.5L578.5,104.5L581.5,101.5" stroke="#b0b0b0" stroke-width="1.2" fill="none" /><path d="M624.5,72.5H638.0V82.0H630.5L627.0,85.5V82.0H624.5Z" stroke="#b0b0b0" stroke-width="1.2" fill="#f6f6f6" /><rect x="623" y="72" width="9" height="5" fill="#f3f2f1"/><path d="M623.5,74.5H632M629,71.5L632,74.5L629,77.5" stroke="#b0b0b0" stroke-width="1.1" fill="none" /><path d="M624.5,95.5H638.0V105.0H630.5L627.0,108.5V105.0H624.5Z" stroke="#b0b0b0" stroke-width="1.2" fill="#f0f0f0" /><path d="M624.5,118.5H638.0V128.0H630.5L627.0,131.5V128.0H624.5Z" stroke="#3b3b3b" stroke-width="1.2" fill="#fafafa" /><rect x="623" y="117" width="7" height="9" fill="#f3f2f1"/><path d="M624,126.5L625,123.5L632.5,116L635,118.5L627.5,126Z" stroke="#d0473f" stroke-width="1" fill="#f08a84" /><path d="M630.5,118L633,120.5" stroke="#3b3b3b" stroke-width="1" fill="none" /><path d="M742.5,101.5L745.5,104.5L748.5,101.5" stroke="#b0b0b0" stroke-width="1.2" fill="none" /><path d="M759.5,86.2L760.8,82.5L772,71.5A1.7,1.7 0 0 1 774.6,74L763.4,85Z" stroke="#b0b0b0" stroke-width="1.1" fill="#e9e9e9" /><path d="M759.5,101.5L767.5,94L774,100L766,108.5H763Z" stroke="#b0b0b0" stroke-width="1.1" fill="#efefef" /><path d="M759.5,101.5L763.5,97.8L770,104L766,108.5H763.5Z" stroke="#b0b0b0" stroke-width="0.8" fill="#d4d4d4" /><path d="M852.5,73.7H864.5L872.5,81.7V100.2H852.5Z" stroke="#3b3b3b" stroke-width="1.3" fill="#fafafa" /><path d="M864.5,73.7V81.7H872.5" stroke="#3b3b3b" stroke-width="1.3" fill="none" /><path d="M856,80.5L862,80.5" stroke="#d0473f" stroke-width="1.1" fill="none" /><path d="M859,84.4L866,84.4" stroke="#d0473f" stroke-width="1.1" fill="none" /><path d="M856,88.4L864,88.4" stroke="#d0473f" stroke-width="1.1" fill="none" /><path d="M858.7,102.2L860.5,96.5L874.5,82.5A2.6,2.6 0 0 1 878.5,86.2L864.4,100.3Z" stroke="#2e8bd4" stroke-width="1.2" fill="#f6fbff" stroke-linejoin="round"/><path d="M858.7,102.2L860.3,97L864,100.6Z" stroke="#2e8bd4" stroke-width="0.8" fill="#2e8bd4" /><path d="M872.8,84.2L876.8,88" stroke="#2e8bd4" stroke-width="1.1" fill="none" /><path d="M884.5,128.0L887.5,131.0L890.5,128.0" stroke="#444" stroke-width="1.2" fill="none" /><path d="M897.5,72.5H902.2L905.0,75.3V82.5H897.5Z" stroke="#3b3b3b" stroke-width="1.1" fill="#fafafa" /><path d="M902.2,72.5V75.3H905.0" stroke="#3b3b3b" stroke-width="1.1" fill="none" /><path d="M899.5,78L902.5,78" stroke="#777" stroke-width="1" fill="none" /><path d="M905.5,77.5H910.2L913.0,80.3V87.0H905.5Z" stroke="#3b3b3b" stroke-width="1.1" fill="#fafafa" /><path d="M910.2,77.5V80.3H913.0" stroke="#3b3b3b" stroke-width="1.1" fill="none" /><path d="M907.5,82.5L910.5,82.5" stroke="#d0473f" stroke-width="1" fill="none" /><path d="M908.5,84.8L911,84.8" stroke="#d0473f" stroke-width="1" fill="none" /><path d="M897.5,84V85.8H903.5M901.5,83.6L903.8,85.8L901.5,88" stroke="#2e8bd4" stroke-width="1.1" fill="none" /><path d="M1012,79.5L1015,82.5L1018,79.5" stroke="#333" stroke-width="1.2" fill="none" /><path d="M899.5,94.5H906.5L910.5,98.5V109.5H899.5Z" stroke="#3b3b3b" stroke-width="1.2" fill="#fafafa" /><path d="M906.5,94.5V98.5H910.5" stroke="#3b3b3b" stroke-width="1.2" fill="none" /><path d="M902,100.5L904.5,100.5" stroke="#d0473f" stroke-width="1.1" fill="none" /><path d="M903.5,103.5L905.5,103.5" stroke="#d0473f" stroke-width="1.1" fill="none" /><path d="M992.5,101.5L995.5,104.5L998.5,101.5" stroke="#444" stroke-width="1.2" fill="none" /><rect x="897.5" y="118.5" width="15" height="13" rx="0" stroke="#3b3b3b" stroke-width="1.2" fill="#fafafa"/><path d="M897.5,121.5L912.5,121.5" stroke="#3b3b3b" stroke-width="1.1" fill="none" /><path d="M901.5,121.5L901.5,131.5" stroke="#3b3b3b" stroke-width="1.1" fill="none" /><rect x="899" y="123.5" width="5" height="4.5" fill="#fafafa"/><path d="M899.5,125.8H906.5M904,123.5L906.5,125.8L904,128.2" stroke="#2e8bd4" stroke-width="1.1" fill="none" /><path d="M1009.5,125.0L1012.5,128.0L1015.5,125.0" stroke="#444" stroke-width="1.2" fill="none" /><path d="M1048.5,73.7H1060.5L1068.5,81.7V100.2H1048.5Z" fill="#fafafa"/><path d="M1056.5,100.2H1048.5V73.7H1060.5L1068.5,81.7V91.5" stroke="#3b3b3b" stroke-width="1.3" fill="none" /><path d="M1060.5,73.7V81.7H1068.5" stroke="#3b3b3b" stroke-width="1.3" fill="none" /><path d="M1052,80.5L1058,80.5" stroke="#d0473f" stroke-width="1.1" fill="none" /><path d="M1055,84.4L1062,84.4" stroke="#d0473f" stroke-width="1.1" fill="none" /><path d="M1052,88.4L1060,88.4" stroke="#d0473f" stroke-width="1.1" fill="none" /><path d="M1053,92L1060,101L1076,86L1076,104H1053Z" fill="#f3f2f1" opacity="0"/><path d="M1054.5,95.2L1061,101.8L1075,88.3" stroke="#4ca858" stroke-width="1.3" fill="none" /><path d="M1055.5,127.80000000000001L1058.5,130.8L1061.5,127.80000000000001" stroke="#444" stroke-width="1.2" fill="none" /><path d="M1085.5,71.6H1092.5L1096.7,75.8V86.6H1085.5Z" stroke="#3b3b3b" stroke-width="1.2" fill="#fafafa" /><path d="M1092.5,71.6V75.8H1096.7" stroke="#3b3b3b" stroke-width="1.2" fill="none" /><path d="M1088.5,77.19999999999999L1090.8,77.19999999999999" stroke="#d0473f" stroke-width="1" fill="none" /><path d="M1089.5,80.19999999999999L1091.5,80.19999999999999" stroke="#d0473f" stroke-width="1" fill="none" /><path d="M1085.5,94.6H1092.5L1096.7,98.8V109.6H1085.5Z" stroke="#3b3b3b" stroke-width="1.2" fill="#fafafa" /><path d="M1092.5,94.6V98.8H1096.7" stroke="#3b3b3b" stroke-width="1.2" fill="none" /><path d="M1088.5,100.19999999999999L1090.8,100.19999999999999" stroke="#d0473f" stroke-width="1" fill="none" /><path d="M1089.5,103.19999999999999L1091.5,103.19999999999999" stroke="#d0473f" stroke-width="1" fill="none" /><path d="M1085.5,117.6H1092.5L1096.7,121.8V132.6H1085.5Z" stroke="#3b3b3b" stroke-width="1.2" fill="#fafafa" /><path d="M1092.5,117.6V121.8H1096.7" stroke="#3b3b3b" stroke-width="1.2" fill="none" /><path d="M1088.5,123.19999999999999L1090.8,123.19999999999999" stroke="#d0473f" stroke-width="1" fill="none" /><path d="M1089.5,126.19999999999999L1091.5,126.19999999999999" stroke="#d0473f" stroke-width="1" fill="none" /><rect x="1091" y="79.5" width="9" height="8.5" fill="#f3f2f1"/><path d="M1092.3,80.5L1098.8,87M1098.8,80.5L1092.3,87" stroke="#e0474c" stroke-width="1.2" fill="none" /><rect x="1089.5" y="102.5" width="10" height="8" fill="#f3f2f1"/><path d="M1099,106.5H1090.5M1093.8,103.2L1090.5,106.5L1093.8,109.8" stroke="#2e8bd4" stroke-width="1.2" fill="none" /><rect x="1089.5" y="125.5" width="10" height="8" fill="#f3f2f1"/><path d="M1090,129.5H1098.5M1095.2,126.2L1098.5,129.5L1095.2,132.8" stroke="#2e8bd4" stroke-width="1.2" fill="none" /><path d="M1144.5,78.5L1147.5,81.5L1150.5,78.5" stroke="#444" stroke-width="1.2" fill="none" /><rect x="1195.6" y="73.4" width="17.8" height="24" rx="0" stroke="#3b3b3b" stroke-width="1.2" fill="#fafafa"/><path d="M1206,81.4L1210,81.4" stroke="#666" stroke-width="1" fill="none" /><path d="M1206,85.4L1210,85.4" stroke="#666" stroke-width="1" fill="none" /><path d="M1206,89.4L1210,89.4" stroke="#666" stroke-width="1" fill="none" /><rect x="1186.4" y="76.4" width="18" height="23.8" rx="0" stroke="#1e6fa8" stroke-width="1.3" fill="#f4f9fd"/><path d="M1190,84.4L1201,84.4" stroke="#777" stroke-width="1" fill="none" /><path d="M1190,88.4L1201,88.4" stroke="#777" stroke-width="1" fill="none" /><path d="M1190,92.4L1201,92.4" stroke="#777" stroke-width="1" fill="none" /><path d="M1196.5,127.80000000000001L1199.5,130.8L1202.5,127.80000000000001" stroke="#444" stroke-width="1.2" fill="none" /><circle cx="1271.8" cy="81" r="8" stroke="#b0b0b0" stroke-width="1.2" fill="#ededed"/><path d="M1260.5,100.5C1260.5,94 1265,89.5 1271,89.5C1273.5,89.5 1275,90 1276.5,91" stroke="#b0b0b0" stroke-width="1.2" fill="none" /><circle cx="1280.6" cy="95.2" r="7" stroke="#b0b0b0" stroke-width="1.2" fill="#ededed"/><path d="M1275.8,90.2L1285.4,100.2" stroke="#b0b0b0" stroke-width="1.2" fill="none" /><path d="M1290.5,128.0L1293.5,131.0L1296.5,128.0" stroke="#b0b0b0" stroke-width="1.2" fill="none" /><path d="M1312.5,73.7H1324.5L1332.5,81.7V100.2H1312.5Z" stroke="#3b3b3b" stroke-width="1.3" fill="#fafafa" /><path d="M1324.5,73.7V81.7H1332.5" stroke="#3b3b3b" stroke-width="1.3" fill="none" /><path d="M1329.2,93V89.5A3.9,3.9 0 0 1 1337,89.5V93" stroke="#d68b2c" stroke-width="1.3" fill="none" /><rect x="1326.6" y="93.4" width="12" height="9" rx="0" stroke="#d68b2c" stroke-width="1" fill="#f9d27c"/><path d="M1368.5,73.6H1391.5L1368.5,96.2Z" stroke="#3b3b3b" stroke-width="1.2" fill="#fafafa" /><path d="M1383,83.5C1386,82 1386.5,84.5 1385,86.5C1387,88.5 1391,85.5 1396,84" stroke="#d0473f" stroke-width="1.2" fill="none" /><path d="M1368.5,100C1374,96.5 1380,93 1384,94C1386,94.5 1384.5,97.5 1386,98.5C1388,99.5 1392,96.5 1396,95" stroke="#d0473f" stroke-width="1.2" fill="none" /><path d="M1387.5,128.0L1390.5,131.0L1393.5,128.0" stroke="#444" stroke-width="1.2" fill="none" /><path d="M279.5,182.5L285.5,188.5L291.5,182.5" stroke="#444" stroke-width="1.1" fill="none" /><path d="M321.5,180.5L331.5,190.5M331.5,180.5L321.5,190.5" stroke="#444" stroke-width="1.1" fill="none" /><path d="M13.5,220.5L19.8,214.2L26,220.5" stroke="#444" stroke-width="1.1" fill="none" /><path d="M335.5,215A7.2,7.2 0 0 0 322,212.5M321.5,217.5A7.2,7.2 0 0 0 335,220" stroke="#2f9e55" stroke-width="1.2" fill="none" /><path d="M321.8,208.8V213H326M335.3,223.7V219.5H331" stroke="#2f9e55" stroke-width="1.2" fill="none" /><path d="M802,171L810.4,179.4M810.4,171L802,179.4" stroke="#444" stroke-width="1.1" fill="none" /><path d="M1120,171L1128.4,179.4M1128.4,171L1120,179.4" stroke="#444" stroke-width="1.1" fill="none" /><path d="M1120,515L1128.4,523.4M1128.4,515L1120,523.4" stroke="#444" stroke-width="1.1" fill="none" /><path d="M1366.5,183L1373.5,190L1380.5,183" stroke="#444" stroke-width="1.1" fill="none" /><path d="M1410.5,180.5L1420.5,190.5M1420.5,180.5L1410.5,190.5" stroke="#444" stroke-width="1.1" fill="none" /><path d="M1361.5,221L1368.2,214.3L1375,221" stroke="#8a5a2b" stroke-width="1.6" fill="none"/><path d="M1363.2,220.5L1368.2,215.8L1373.2,220.5V227.5H1363.2Z" fill="#fbf3d5" stroke="#9a7a4a" stroke-width="0.9"/><rect x="1366.8" y="222" width="3" height="5.5" fill="#e8b62c" stroke="#8a6a2a" stroke-width="0.6"/><rect x="1371.3" y="214.5" width="1.8" height="3.2" fill="#8a5a2b"/><path d="M1390,219H1397.4L1393.7,223.2Z" fill="#111"/><path d="M1407.8,216L1412,220.5L1407.8,225M1412.8,216L1417,220.5L1412.8,225" stroke="#6f7f9f" stroke-width="1.5" fill="none" /><rect x="1153.5" y="281.5" width="15" height="11" rx="0" stroke="#8c8c8c" stroke-width="1" fill="#f4f4f4"/><rect x="1154" y="282" width="14" height="2.6" fill="#d0d0d0"/><rect x="1155.2" y="285.4" width="2.2" height="1.2" fill="#9a9a9a"/><rect x="1158.6" y="285.4" width="2.2" height="1.2" fill="#9a9a9a"/><rect x="1162" y="285.4" width="2.2" height="1.2" fill="#9a9a9a"/><rect x="1165.2" y="285.4" width="2.2" height="1.2" fill="#9a9a9a"/><rect x="1155.2" y="288.09999999999997" width="2.2" height="1.2" fill="#9a9a9a"/><rect x="1158.6" y="288.09999999999997" width="2.2" height="1.2" fill="#9a9a9a"/><rect x="1162" y="288.09999999999997" width="2.2" height="1.2" fill="#9a9a9a"/><rect x="1165.2" y="288.09999999999997" width="2.2" height="1.2" fill="#9a9a9a"/><rect x="1155.2" y="290.59999999999997" width="2.2" height="1.2" fill="#9a9a9a"/><rect x="1158.6" y="290.59999999999997" width="2.2" height="1.2" fill="#9a9a9a"/><rect x="1162" y="290.59999999999997" width="2.2" height="1.2" fill="#9a9a9a"/><rect x="1165.2" y="290.59999999999997" width="2.2" height="1.2" fill="#9a9a9a"/><path d="M1391.2,284.5L1395.2,288.5L1399.2,284.5" stroke="#777" stroke-width="1" fill="none" /><path d="M1409.2,288.5A8,8 0 0 1 1422.5,281.2L1425,278.8V286.2H1417.6L1420.2,283.6A4.8,4.8 0 0 0 1412.6,288.2Z" fill="#7fb0f0" stroke="#2f6fd0" stroke-width="0.8"/><path d="M1425,286A8,8 0 0 1 1411.8,293.4L1409.3,295.8V288.4H1416.7L1414.1,291A4.8,4.8 0 0 0 1421.7,286.4Z" fill="#7fb0f0" stroke="#2f6fd0" stroke-width="0.8"/><rect x="1158.6" y="350.2" width="17.4" height="19.6" fill="#c9c9c9"/><rect x="1157.4" y="349" width="17.4" height="19.8" fill="#fdfdfd" stroke="#b4b4b4" stroke-width="0.8"/><rect x="1157.4" y="349" width="17.4" height="6.8" fill="#2b5797"/><rect x="1161" y="358.6" width="10.4" height="1.1" fill="#3a4a6a"/><rect x="1161" y="361.0" width="10.4" height="1.1" fill="#3a4a6a"/><rect x="1161" y="363.40000000000003" width="10.4" height="1.1" fill="#3a4a6a"/><rect x="1161" y="365.8" width="10.4" height="1.1" fill="#3a4a6a"/><path d="M1324.5,349.5H1334.5L1339.5,354.5V367.5H1324.5Z" fill="#e9edf5" stroke="#8c96aa" stroke-width="1"/><path d="M1334.5,349.5V354.5H1339.5" fill="#cfd6e4" stroke="#8c96aa" stroke-width="0.9"/><circle cx="1338.6" cy="365.6" r="4.9" fill="#f1f1f1" stroke="#8a8a8a" stroke-width="1"/><rect x="1158.6" y="380.2" width="17.4" height="19.6" fill="#c9c9c9"/><rect x="1157.4" y="379" width="17.4" height="19.8" fill="#fdfdfd" stroke="#b4b4b4" stroke-width="0.8"/><rect x="1157.4" y="379" width="17.4" height="6.8" fill="#2b5797"/><rect x="1161" y="388.6" width="10.4" height="1.1" fill="#3a4a6a"/><rect x="1161" y="391.0" width="10.4" height="1.1" fill="#3a4a6a"/><rect x="1161" y="393.40000000000003" width="10.4" height="1.1" fill="#3a4a6a"/><rect x="1161" y="395.8" width="10.4" height="1.1" fill="#3a4a6a"/><path d="M1324.5,379.5H1334.5L1339.5,384.5V397.5H1324.5Z" fill="#e9edf5" stroke="#8c96aa" stroke-width="1"/><path d="M1334.5,379.5V384.5H1339.5" fill="#cfd6e4" stroke="#8c96aa" stroke-width="0.9"/><circle cx="1338.6" cy="395.6" r="4.9" fill="#f1f1f1" stroke="#8a8a8a" stroke-width="1"/><rect x="1158.6" y="410.2" width="17.4" height="19.6" fill="#c9c9c9"/><rect x="1157.4" y="409" width="17.4" height="19.8" fill="#fdfdfd" stroke="#b4b4b4" stroke-width="0.8"/><rect x="1157.4" y="409" width="17.4" height="6.8" fill="#2b5797"/><rect x="1161" y="418.6" width="10.4" height="1.1" fill="#3a4a6a"/><rect x="1161" y="421.0" width="10.4" height="1.1" fill="#3a4a6a"/><rect x="1161" y="423.40000000000003" width="10.4" height="1.1" fill="#3a4a6a"/><rect x="1161" y="425.8" width="10.4" height="1.1" fill="#3a4a6a"/><path d="M1324.5,409.5H1334.5L1339.5,414.5V427.5H1324.5Z" fill="#e9edf5" stroke="#8c96aa" stroke-width="1"/><path d="M1334.5,409.5V414.5H1339.5" fill="#cfd6e4" stroke="#8c96aa" stroke-width="0.9"/><circle cx="1338.6" cy="425.6" r="4.9" fill="#f1f1f1" stroke="#8a8a8a" stroke-width="1"/><rect x="1158.6" y="440.2" width="17.4" height="19.6" fill="#c9c9c9"/><rect x="1157.4" y="439" width="17.4" height="19.8" fill="#fdfdfd" stroke="#b4b4b4" stroke-width="0.8"/><rect x="1157.4" y="439" width="17.4" height="6.8" fill="#3c9a45"/><rect x="1161.2" y="449.6" width="10" height="6.6" fill="#fff" stroke="#4caf50" stroke-width="1"/><path d="M1164.5,449.6V456.2M1168,449.6V456.2M1161.2,452.9H1171.2" stroke="#4caf50" stroke-width="0.9"/><path d="M1324.5,439.5H1334.5L1339.5,444.5V457.5H1324.5Z" fill="#e9edf5" stroke="#8c96aa" stroke-width="1"/><path d="M1334.5,439.5V444.5H1339.5" fill="#cfd6e4" stroke="#8c96aa" stroke-width="0.9"/><rect x="1327" y="444" width="1.6" height="1.6" fill="#6a7488"/><rect x="1330" y="444.3" width="5.5" height="1" fill="#8c96aa"/><rect x="1327" y="448" width="1.6" height="1.6" fill="#6a7488"/><rect x="1330" y="448.3" width="5.5" height="1" fill="#8c96aa"/><rect x="1327" y="452" width="1.6" height="1.6" fill="#6a7488"/><rect x="1330" y="452.3" width="5.5" height="1" fill="#8c96aa"/><circle cx="1338.6" cy="455.6" r="4.9" fill="#f1f1f1" stroke="#8a8a8a" stroke-width="1"/><path d="M1158.3,715.5H1165.5L1169,719V727.5H1158.3Z" fill="#f4f7fb" stroke="#5d6b85" stroke-width="0.9"/><rect x="1160.3" y="718.6" width="6.6" height="0.9" fill="#5d6b85"/><rect x="1160.3" y="720.7" width="6.6" height="0.9" fill="#5d6b85"/><rect x="1160.3" y="722.8000000000001" width="6.6" height="0.9" fill="#5d6b85"/><rect x="1160.3" y="724.9" width="6.6" height="0.9" fill="#5d6b85"/><path d="M1158.3,737.5H1165.5L1169,741V749.5H1158.3Z" fill="#f4f7fb" stroke="#5d6b85" stroke-width="0.9"/><rect x="1160.3" y="740.6" width="5.6" height="0.9" fill="#5d6b85"/><rect x="1160.3" y="742.7" width="5.6" height="0.9" fill="#5d6b85"/><rect x="1160.3" y="744.8000000000001" width="5.6" height="0.9" fill="#5d6b85"/><rect x="1160.3" y="746.9" width="5.6" height="0.9" fill="#5d6b85"/><rect x="1164.2" y="745.6" width="6.6" height="5" fill="#f5d680" stroke="#c99a2e" stroke-width="0.7"/><path d="M1165.6,745.6V744A1.9,1.9 0 0 1 1169.4,744V745.6" fill="none" stroke="#9a9a9a" stroke-width="0.9"/><path d="M1157.5,755.5H1164.5L1169,760V770.5H1157.5Z" fill="#f6f8fc" stroke="#8c96aa" stroke-width="0.9"/><path d="M1164.5,755.5V760H1169" fill="#dfe5f0" stroke="#8c96aa" stroke-width="0.8"/><path d="M1166.5,763.2V770.8M1162.7,767H1170.3" stroke="#0a7d0a" stroke-width="3.4"/><path d="M1166.5,763.8V770.2M1163.3,767H1169.7" stroke="#25c425" stroke-width="1.8"/><rect x="1155.5" y="777.8" width="13.5" height="13.2" rx="1" fill="#f6f8fc" stroke="#7a869e" stroke-width="0.9"/><rect x="1158.7" y="776.2" width="7" height="2.8" fill="#e4e8f0" stroke="#7a869e" stroke-width="0.8"/><path d="M1166.5,783.7V791.3M1162.7,787.5H1170.3" stroke="#0a7d0a" stroke-width="3.4"/><path d="M1166.5,784.3V790.7M1163.3,787.5H1169.7" stroke="#25c425" stroke-width="1.8"/><path d="M1155.5,797.5H1163L1166.5,801V811.5H1155.5Z" fill="#f4f7fb" stroke="#5d6b85" stroke-width="0.9"/><rect x="1157.3" y="800.6" width="6" height="0.9" fill="#5d6b85"/><rect x="1157.3" y="802.9" width="6" height="0.9" fill="#5d6b85"/><rect x="1157.3" y="805.2" width="6" height="0.9" fill="#5d6b85"/><rect x="1157.3" y="807.5" width="6" height="0.9" fill="#5d6b85"/><path d="M1160.5,810.5L1166,805L1163.8,802.8H1170.2V809.2L1168,807L1162.5,812.5Z" fill="#7fb0f0" stroke="#2f5fb0" stroke-width="0.8"/><rect x="1156.2" y="822.3" width="1.6" height="1.6" fill="#2a3346"/><rect x="1159.6" y="822.3" width="10.4" height="1.6" fill="#2a3346"/><rect x="1156.2" y="826.0" width="1.6" height="1.6" fill="#2a3346"/><rect x="1159.6" y="826.0" width="10.4" height="1.6" fill="#2a3346"/><rect x="1156.2" y="829.6999999999999" width="1.6" height="1.6" fill="#2a3346"/><rect x="1159.6" y="829.6999999999999" width="10.4" height="1.6" fill="#2a3346"/><path d="M75.5,851.5H80.5C81.3,851.5 81.8,852 81.8,852.8V861.5H75.5Z M88,851.5H83.2C82.4,851.5 81.8,852 81.8,852.8 M88,851.5V856" stroke="#444" stroke-width="1" fill="none" /><path d="M82.5,859.5L85,862L88.8,857.3" stroke="#444" stroke-width="1.1" fill="none" /><circle cx="116.3" cy="851.2" r="1.7" stroke="#444" stroke-width="1" fill="none"/><path d="M110.8,853.3C113,854.3 114.8,854.7 116.3,854.7C117.8,854.7 119.6,854.3 121.8,853.3L122.3,854.6C120.7,855.4 119.5,855.9 118.6,856.1V858.3M114.2,856.1C113.2,855.9 112,855.4 110.4,854.6ZM114.2,856.1L113.2,862.8L114.6,863L116.3,858.8" stroke="#444" stroke-width="0.9" fill="none" /><text x="118.3" y="863.3" font-family="Liberation Sans,sans-serif" font-size="8.5" font-weight="700" fill="#444">?</text><path d="M1072.5,852.5H1077.5L1080.5,855.5V862.5H1072.5Z" stroke="#444" stroke-width="1" fill="none" /><path d="M1077.5,852.5V855.5H1080.5" stroke="#444" stroke-width="0.8" fill="none" /><path d="M1068.5,853.5V850.5H1071.5M1081,850.5H1084V853.5M1084,861V864H1081M1071.5,864H1068.5V861" stroke="#444" stroke-width="1" fill="none" /><path d="M1141.5,851C1144,850.3 1146,850.6 1147.6,851.8C1149.2,850.6 1151.2,850.3 1153.7,851V860.5C1151.2,859.8 1149.2,860.1 1147.6,861.3C1146,860.1 1144,859.8 1141.5,860.5Z M1147.6,851.8V861.3" stroke="#b4b4b4" stroke-width="1" fill="none" /><path d="M1143.2,853.6L1146,853.6" stroke="#c4c4c4" stroke-width="0.8" fill="none" /><path d="M1149.2,853.6L1152,853.6" stroke="#c4c4c4" stroke-width="0.8" fill="none" /><path d="M1143.2,855.6L1146,855.6" stroke="#c4c4c4" stroke-width="0.8" fill="none" /><path d="M1149.2,855.6L1152,855.6" stroke="#c4c4c4" stroke-width="0.8" fill="none" /><path d="M1143.2,857.6L1146,857.6" stroke="#c4c4c4" stroke-width="0.8" fill="none" /><path d="M1149.2,857.6L1152,857.6" stroke="#c4c4c4" stroke-width="0.8" fill="none" /><rect x="1182.5" y="849.5" width="10.5" height="13" rx="0" stroke="#444" stroke-width="1" fill="#fbfbfb"/><path d="M1184.5,852.2L1191,852.2" stroke="#444" stroke-width="0.9" fill="none" /><path d="M1184.5,854.2L1191,854.2" stroke="#444" stroke-width="0.9" fill="none" /><path d="M1184.5,856.2L1191,856.2" stroke="#444" stroke-width="0.9" fill="none" /><path d="M1184.5,858.2L1191,858.2" stroke="#444" stroke-width="0.9" fill="none" /><path d="M1184.5,860.2L1191,860.2" stroke="#444" stroke-width="0.9" fill="none" /><rect x="1221.5" y="849.5" width="11.5" height="12.5" rx="0" stroke="#444" stroke-width="1" fill="#e8e8e8"/><path d="M1221.5,852L1233,852" stroke="#444" stroke-width="0.9" fill="none" /><path d="M1223.5,854.5L1229,854.5" stroke="#444" stroke-width="0.9" fill="none" /><path d="M1223.5,856.7L1229,856.7" stroke="#444" stroke-width="0.9" fill="none" /><path d="M1223.5,858.9L1229,858.9" stroke="#444" stroke-width="0.9" fill="none" /><circle cx="1231.3" cy="858.8" r="4" stroke="#444" stroke-width="1" fill="#d6d6d6"/><path d="M1227.3,858.8H1235.3M1231.3,854.8V862.8" stroke="#444" stroke-width="0.8" fill="none" /><path d="M1254,856.5L1262,856.5" stroke="#555" stroke-width="1.1" fill="none" /><path d="M1371.8,856.5H1379.4M1375.6,852.7V860.3" stroke="#555" stroke-width="1.1" fill="none" /></svg>
<span class="t" style="left:1159.3px;top:350px;font-size:6.5px;line-height:6.5px;font-weight:700;color:#fff;transform:scaleX(0.9410);transform-origin:0 0;">DOC</span>
<span class="t" style="left:1159.3px;top:380px;font-size:6.5px;line-height:6.5px;font-weight:700;color:#fff;transform:scaleX(0.9410);transform-origin:0 0;">DOC</span>
<span class="t" style="left:1159.3px;top:410px;font-size:6.5px;line-height:6.5px;font-weight:700;color:#fff;transform:scaleX(0.9410);transform-origin:0 0;">DOC</span>
<span class="t" style="left:1159.3px;top:440px;font-size:6.5px;line-height:6.5px;font-weight:700;color:#fff;transform:scaleX(1.0746);transform-origin:0 0;">XLS</span>
<span class="t" style="left:55px;top:71px;font-size:9.5px;line-height:9.5px;transform:scaleX(0.8807);transform-origin:0 0;">abc</span>
<span class="t" style="left:59px;top:127px;font-size:8.5px;line-height:8.5px;font-weight:700;color:#2e8bd4;transform:scaleX(0.8000);transform-origin:0 0;">123</span>
<span class="t" style="left:396.8px;top:81px;font-size:23.5px;line-height:23.5px;color:#1e6fc2;transform:scaleX(0.82);transform-origin:0 0;-webkit-text-stroke:0.35px #1e6fc2;">a</span>
<span class="t" style="left:410.2px;top:73px;font-size:16.5px;line-height:16.5px;font-weight:500;color:#1a7a1a;font-family:'Noto Sans CJK JP','Liberation Sans',sans-serif;transform:scaleX(0.92);transform-origin:0 0;">あ</span>
<span class="t" style="left:459.3px;top:71px;font-size:23px;line-height:23px;font-weight:300;color:#3a96d8;font-family:'Noto Sans CJK KR','Liberation Sans',sans-serif;">가</span>
</section>
</div></body></html>
